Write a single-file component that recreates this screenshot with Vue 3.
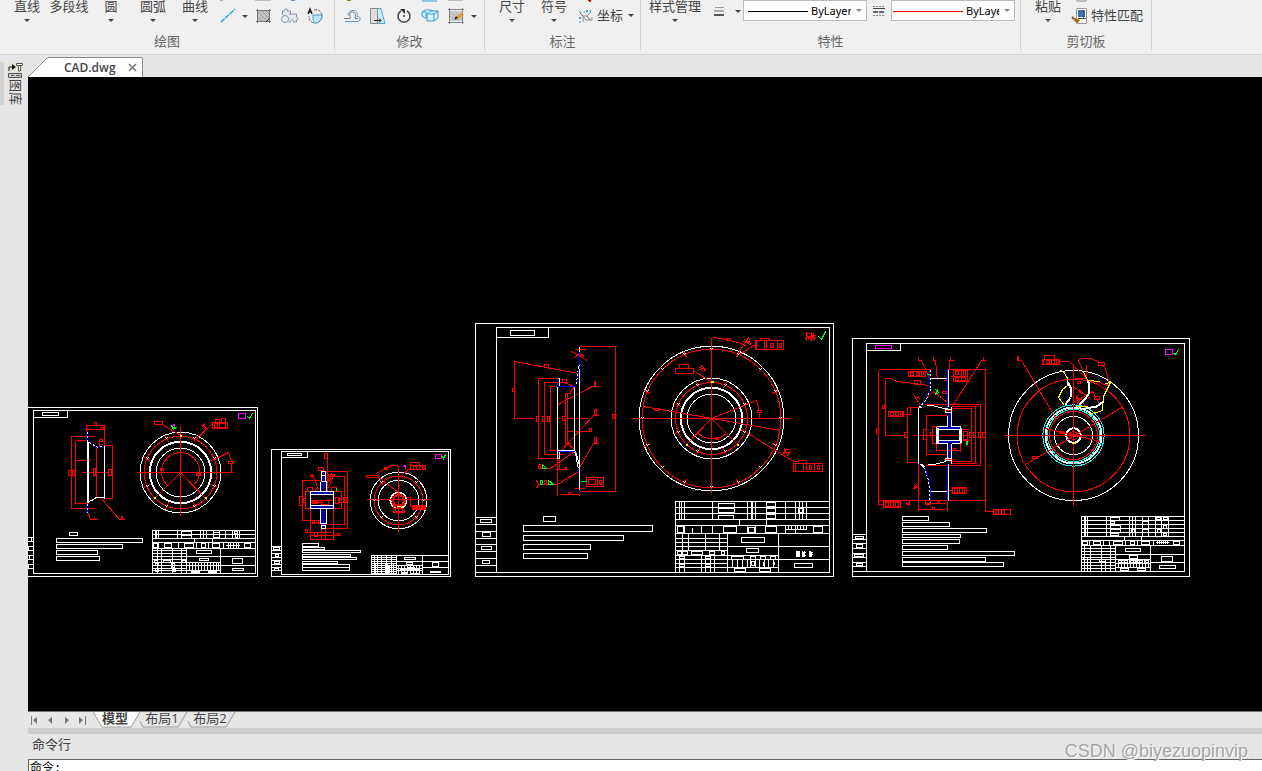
<script setup>
// Drawing data is written in thirds of a pixel, relative to each sheet's origin.
// h x1 x2 y…   horizontal lines      v y1 y2 x…   vertical lines
// r x1 y1 x2 y2 …   boxes            p x y x y …   polyline
const snap = (n) => Math.floor(n / 3) + 0.5

function toPath(source) {
  let d = ''
  for (const item of source.split(/[;\n]/)) {
    const [kind, ...rest] = item.trim().split(/\s+/)
    const n = rest.map((v) => snap(Number(v)))
    if (kind === 'h') for (const y of n.slice(2)) d += `M${n[0]} ${y}H${n[1]}`
    if (kind === 'v') for (const x of n.slice(2)) d += `M${x} ${n[0]}V${n[1]}`
    if (kind === 'r') {
      for (let i = 0; i + 3 < n.length; i += 4) {
        d += `M${n[i]} ${n[i + 1]}H${n[i + 2]}V${n[i + 3]}H${n[i]}Z`
      }
    }
    if (kind === 'p') {
      d += `M${n[0]} ${n[1]}`
      for (let i = 2; i < n.length; i += 2) d += `L${n[i]} ${n[i + 1]}`
    }
  }
  return d
}

function bolts(cx, cy, radius, angles, reach) {
  const ticks = []
  const marks = []
  for (const a of angles) {
    const c = Math.cos((a * Math.PI) / 180)
    const s = Math.sin((a * Math.PI) / 180)
    const at = (r) => `${Math.round(cx + r * c)} ${Math.round(cy + r * s)}`
    ticks.push(`p ${at(radius - reach)} ${at(radius + reach)}`)
    const x = Math.round(cx + radius * c)
    const y = Math.round(cy + radius * s)
    marks.push(`p ${x - 3} ${y - 3} ${x + 3} ${y + 3}`, `p ${x - 3} ${y + 3} ${x + 3} ${y - 3}`)
  }
  return { ticks: ticks.join(';'), marks: marks.join(';') }
}

const eight = [22.5, 67.5, 112.5, 157.5, 202.5, 247.5, 292.5, 337.5]
const sixteen = Array.from({ length: 16 }, (_, i) => i * 22.5)
const b1 = bolts(458, 217, 109, eight, 12)
const b2 = bolts(401, 180, 73, [0, 45, 135, 180, 225, 315], 9)
const b3 = bolts(244, 301, 208, sixteen, 10)
const b4 = bolts(244, 301, 108, eight, 12)

const sheets = [
  {
    x: 28, y: 400,
    circles: [
      [458, 217, 121, 'white'], [458, 217, 109, 'red'], [458, 217, 92, 'white thick'],
      [458, 217, 73, 'white'],
    ],
    arcs: [['M139 85 A19 19 0 1 1 166 85', 'red']],
    layers: [
      ['red', `v 73 95 175;v 73 136 230;h 175 230 76;r 199 67 206 76;h 168 229 88;r 217 82 227 88
        h 126 198 109 324;v 109 324 130;v 121 310 142;h 142 177 121 310;h 138 188 181;h 160 192 217
        r 121 211 129 226 133 211 139 226 196 205 203 226 241 208 251 226;v 142 290 205;h 205 238 217
        p 229 136 253 136 253 296 229 296;p 178 334 188 358 207 358;v 348 358 199;p 217 293 274 358 290 358
        r 280 348 284 358;v 115 136 214;r 215 118 222 124;p 205 142 224 130;h 325 614 217;v 76 347 458
        p 458 217 370 303;p 458 217 542 303;p 559 177 600 158 611 185;r 601 184 617 190;v 190 217 611
        r 378 64 404 74;p 404 73 456 107;r 553 67 599 85 562 58 575 67 580 55 592 67 559 70 568 82 575 70 592 82
        p 553 71 495 124;p 520 82 529 70 532 88 520 76;p 490 118 505 110;r 398 205 406 212 505 219 517 226
        ${b1.ticks}`],
      ['white', `r -10 22 689 529 16 31 683 520 16 31 119 52 43 37 92 47
        h -10 16 412 425 438 451 466 478 492 505;v 412 425 9;v 438 451 1;v 466 478 5;v 492 505 1
        v 120 308 178;v 136 296 229;p 178 308 205 292 229 292
        r 124 397 148 406 85 415 343 427 85 433 283 445 85 451 208 463 85 469 214 481
        r 373 391 683 520;h 373 683 403 415 427 445;v 391 415 383 386 391 448 460 490 517 526 535 557 575 592 613 634
        r 460 394 490 406 557 397 575 412 619 394 628 400 622 403 628 412;v 415 427 499 553
        r 376 430 388 442 409 430 430 442 470 430 496 442 520 430 532 442 553 430 574 442 649 430 667 442
        v 427 445 391 451 505 541 586;h 592 634 436;v 427 445 600 608 616 624 632
        v 445 520 475 577;h 373 475 451 460 469 478 487 496 505 511;v 445 520 387 400 433 459
        r 379 480 388 486 406 480 427 486 463 480 472 486 382 490 391 495 430 490 439 502 382 505 391 514 433 508 442 514
        h 475 577 469 487 496 511;r 505 451 550 460 514 475 541 481;v 487 511 484 493 502 511 520 529 538 547 556 565 571
        r 490 514 514 517 541 514 565 517;h 577 683 469 496;r 613 475 643 490 613 505 646 511;${b1.marks}`],
      ['white thick', 'v 121 308 177'],
      ['blue', 'v 95 120 175;v 310 338 175;p 181 124 205 142 229 137'],
      ['white dash', 'v 95 120 178;v 310 338 178;p 184 127 208 142 229 136;p 181 306 205 292'],
      ['yellow thick', 'h 376 382 292;h 529 535 292;h 454 460 107'],
      ['green', 'p 430 82 445 82 436 88 430 76;p 658 49 664 55 674 40'],
      ['magenta', 'p 433 76 439 73 439 80;r 631 40 652 55'],
    ],
  },
  {
    x: 265, y: 440,
    circles: [
      [401, 180, 85, 'white'], [401, 180, 73, 'red'], [401, 180, 61, 'white'],
      [401, 180, 24, 'white thick'], [401, 180, 16, 'red thick'], [401, 180, 21, 'red dash'],
    ],
    hatches: [[137, 154, 205, 163], [137, 196, 205, 206], [169, 112, 181, 154], [169, 206, 181, 249]],
    layers: [
      ['red', `v 37 154 187;r 178 40 186 55 160 82 176 91 136 103 143 110 202 103 209 110
        p 170 94 248 94 248 265 181 265;p 185 109 239 109 239 253 181 253;p 166 121 112 121 112 241 166 241
        p 136 154 121 154 121 206 136 206;p 206 154 229 154 229 206 206 206;r 103 169 112 196 115 175 121 187 211 172 220 190 223 175 229 187 235 172 244 187
        h 136 206 181;h 133 176 187;r 142 184 157 190 169 181 190 192;v 206 298 136 206;h 136 206 298;h 136 226 286;h 118 196 277;r 121 268 128 276
        v 250 298 169 181;r 199 142 214 154 127 142 142 154;p 145 110 160 148;p 205 106 187 148;p 184 94 196 118 184 130 199 100
        p 148 154 154 145 163 151;h 139 166 247;r 142 241 148 250 160 241 166 250 148 277 157 289 217 280 222 286
        h 304 491 179;v 76 274 401;r 304 106 341 112;p 341 112 401 158;p 334 100 360 86 380 76 398 76 401 82;r 358 82 368 88
        p 408 106 436 82;r 436 76 482 88 436 67 463 76 445 79 454 88 463 79 472 88 442 196 482 208
        h 442 482 199 202 205;p 386 180 386 217 418 217 418 205;r 391 206 412 215;v 168 200 436;p 424 172 436 172
        ${b2.ticks}`],
      ['white', `r 19 28 557 409 49 34 551 403 49 34 128 52 67 40 110 47;h 19 49 319 331 340 352 361 373 382 391
        r 25 322 43 328 31 343 40 349 28 364 43 370 28 385 40 390
        r 112 310 160 319 112 322 179 329 112 331 287 337 112 343 257 349 112 352 275 358 112 364 218 370 112 373 254 391;h 112 254 382
        r 136 154 206 206;h 136 206 163 196;v 124 154 166 183;v 206 250 166 183;r 170 94 181 106 170 256 181 264;h 166 183 250 124;v 106 124 170 181
        r 319 346 551 403;h 319 395 352 358 364 370 376 382 388 394 400;v 346 403 328 338 364 380 395 472 349
        h 395 551 364;h 472 551 382;h 395 472 375 385 392;v 375 403 400 409 418 427 436 445 454 463
        r 418 352 452 358 424 367 443 374 502 367 520 379;v 370 403 361 367 385 331;${b2.marks}`],
      ['white thick', 'h 493 527 393;h 427 448 382;h 403 424 387;h 428 460 388;h 410 425 398;h 436 462 399;v 376 400 362;v 376 400 370'],
      ['blue', 'p 172 97 180 103;h 169 181 252'],
      ['green', 'v 142 151 214;p 533 49 536 54 542 43'],
      ['yellow', 'h 394 406 199'],
      ['magenta', 'p 415 79 421 76 421 85;r 511 43 530 55'],
    ],
  },
  {
    x: 470, y: 318,
    layers: [
      ['red', `p 328 85 436 85 436 520 328 520;r 427 289 433 301;h 313 345 94;p 304 100 353 127;p 314 118 330 106 342 118;h 317 341 112
        p 133 130 325 166;v 130 301 133;h 133 191 301;r 127 211 132 220 223 139 236 148;p 263 181 205 181 205 421 263 421
        p 289 193 223 193 223 409 281 409;p 263 205 241 205 241 397 263 397;r 199 295 205 310 217 295 223 310 232 295 239 310
        h 255 270 301;r 277 295 285 307;h 285 351 301;v 226 376 287 292;h 283 300 226 376;h 292 360 340;r 358 331 365 340
        p 263 258 368 205 386 205;r 373 190 377 205;p 275 397 370 292 386 292;r 373 274 380 289;p 325 455 370 376 386 376;r 373 358 380 373
        p 313 400 240 452 202 452;r 205 439 212 451;p 325 460 262 499 202 499;v 421 532 262;r 223 487 230 499;p 199 487 205 499 199 511
        h 255 292 454;v 400 454 268;r 286 448 290 454;h 268 328 529;v 520 532 328;r 295 523 302 529;h 313 342 511
        r 349 478 400 505 355 484 377 499 388 487 395 499;v 478 505 382;p 281 193 313 205 297 226;r 278 184 288 193;p 292 376 313 394`],
      ['white', `r 16 16 1091 775 79 28 1079 763 79 28 236 58 121 37 194 52;h 16 79 763;h 16 79 598 619 640 661 679 700 721 742
        r 31 604 65 613 37 643 62 655 34 685 65 694 37 727 59 736
        r 220 595 257 610 160 622 548 640 160 652 461 667 160 679 362 694 160 706 353 721
        v 85 515 328;v 181 421 263;v 205 400 313;p 263 181 269 181 269 205;p 263 421 269 421 269 400;h 263 313 397
        p 313 400 319 418 322 442 328 457;p 316 400 325 430 328 445;p 316 400 322 421`],
      ['blue', 'v 100 140 328;p 328 145 316 205;h 263 313 205;h 263 313 400;v 181 205 263;v 448 466 325;v 514 523 328'],
      ['white dash', 'p 325 145 322 175 316 205'],
      ['green', 'p 217 440 217 450 230 450 217 440;r 211 487 217 499;p 236 487 236 499 250 499 236 487;h 330 348 490'],
    ],
  },
  {
    x: 630, y: 318,
    circles: [
      [244, 301, 217, 'white'], [244, 301, 208, 'red'], [244, 301, 121, 'white'], [244, 301, 108, 'red'],
      [244, 301, 92, 'white thick'], [244, 301, 73, 'white'],
    ],
    arcs: [['M68 115 A21 21 0 0 0 97 115', 'red']],
    layers: [
      ['red', `h 7 477 301;v 58 524 244;p 244 301 169 378;p 244 301 322 378;p 40 265 450 336;r 73 271 89 278
        p 244 301 379 248 388 280;r 382 277 395 284;v 284 301 388;p 335 335 490 430 503 430;r 490 436 578 460 505 427 530 435 538 442 545 454 562 442 569 454
        v 436 460 496 520 529 553;p 463 392 472 412 481 400 460 406 466 394 478 394;p 250 58 290 64 335 76 350 85;r 289 61 302 67
        r 376 67 461 94 391 61 418 67 447 76 455 88 421 76 431 88;v 67 94 379 403 409 443;p 328 109 376 79;p 322 109 355 58 361 79 340 70 358 73 343 64
        r 136 151 190 166 148 139 176 151;p 190 156 250 195;p 207 157 214 142 226 154 208 148 220 160 230 154;r 256 357 266 363
        v 40 67 530 545;h 525 537 46 55;p 525 64 530 49 537 64;h 538 557 52 58;v 43 64 551;p 538 67 545 49 557 67
        ${b3.ticks};${b4.ticks}`],
      ['white', `r 136 550 599 763;h 136 599 568 586 604 622 646;v 550 604 148 155 163 247 352 364 367 376 409 437 466 496 508 518 529
        r 265 556 313 570 265 572 313 584 265 592 311 604 409 553 437 565 409 571 437 583 409 589 437 601 505 571 520 583
        v 604 622 328 409;r 142 625 161 643 280 625 320 643 355 628 374 643 406 625 440 643 550 625 578 643
        v 622 646 214 247 352 376 466 496 163;v 628 646 187;h 466 530 634;v 622 634 475 484 502 511 520 529
        v 646 763 292 445;h 136 292 661 673 685 697 712 724 736 748;v 646 697 157 175 226 268;v 712 763 148 163 214 226 241 253
        r 142 700 155 709 157 700 172 709 184 700 218 709 238 700 254 709 274 700 284 709
        r 148 715 163 721 148 739 163 745 226 715 241 721 226 739 241 745
        h 292 599 685;h 292 445 712 724 748;h 445 599 724;r 334 658 404 673 349 691 386 703 493 736 548 748
        r 304 715 340 724 361 715 376 724 391 715 406 724 421 715 436 724 364 730 374 742
        v 724 748 307 322 337 352 361 376 388 403 415 430;r 313 751 346 760 388 751 421 760
        h 497 509 700 706;v 697 715 499 502 505;h 514 527 703 712;v 697 715 517 523;h 535 547 703 709;v 697 715 541 538
        ${b3.marks};${b4.marks}`],
      ['white thick', 'v 730 743 399;v 730 740 429;v 700 715 504;v 700 714 520;v 700 714 541'],
      ['yellow thick', 'h 241 249 190;h 166 173 378;h 319 326 378'],
      ['green', 'p 565 55 573 64 587 40'],
    ],
  },
  {
    x: 848, y: 330,
    hatches: [[301, 250, 310, 290], [268, 290, 337, 298], [268, 331, 337, 340], [301, 340, 310, 385]],
    layers: [
      ['red', `h 91 247 118 511;v 118 523 91;h 91 106 523;r 106 514 158 532 112 517 121 529 127 517 136 529 142 517 151 529
        p 298 118 412 118 412 544 436 544;r 436 538 486 553 442 541 451 550 460 541 469 550;h 247 412 511;r 85 295 91 310 403 307 411 322
        p 109 145 130 145 145 154 200 160 240 167;v 145 315 112;h 109 165 316;r 103 226 109 235 199 151 217 162
        h 178 211 232 397;v 232 397 178;r 169 307 178 322;h 192 240 316;v 256 373 235;h 232 298 256 373;r 226 298 235 328 247 307 254 319
        p 265 290 253 290 253 340 265 340;p 228 223 397 223 397 406 228 406;p 310 230 385 230;v 230 400 382;h 310 385 400
        p 310 236 371 236 371 394 310 394;r 363 307 371 322 376 307 382 322 390 307 397 322;h 337 361 298 331;r 346 304 358 328
        h 247 361 316;v 340 364 265 337;h 268 337 361;r 316 355 323 361;v 400 541 211;v 511 541 298;h 211 293 538;r 253 532 260 538
        h 229 293 520;r 268 514 274 520 232 511 247 523;r 313 472 355 490 319 475 328 487 334 475 343 487;v 472 490 350;h 298 313 481
        r 121 244 167 260 127 247 136 257 142 247 151 257;v 244 260 157 162;p 167 253 187 253 187 232
        v 79 91 211 256 308 405;p 208 91 220 91 244 145;p 250 91 262 91 268 151;p 320 91 304 91 304 118;p 412 91 400 91 310 232
        r 181 124 232 139 187 127 196 136 205 127 214 136;v 124 139 220 226;r 316 121 358 154 322 124 331 134 322 142 331 151 340 142 352 151
        h 307 358 138;v 121 138 340 346 352;p 232 208 256 184 298 217;r 283 184 296 190;p 197 193 218 226;p 202 205 211 199 214 208
        h 286 316 241 388;p 196 460 208 472 196 475 205 463;p 172 526 184 514 184 526 175 520;h 285 298 151`],
      ['white', `r 13 25 1025 739 55 40 1009 724 55 40 158 61;h 13 55 724;h 13 55 613 628 640 655 670 682 697 709
        r 22 619 47 626 25 643 44 653 19 673 47 680 25 700 44 707
        r 163 559 242 571 163 577 305 589 163 595 416 607 163 613 338 622 163 628 335 640 163 646 299 658 163 664 500 676 163 682 413 694 163 697 467 709
        v 232 400 211;h 247 298 145 484;v 118 230 301;v 400 511 301;p 234 226 250 226 290 235 310 238;p 237 403 255 402 295 395
        v 290 340 266 337;h 266 298 290 340;h 310 337 290 340;r 268 298 335 331;v 256 290 298;v 230 290 310;v 340 400 310;v 340 385 298
        r 292 238 310 247 292 385 310 391`],
      ['blue', 'v 118 230 298;v 400 511 298;v 118 178 244;p 244 178 232 214 213 233;p 218 400 232 415 241 445 247 484 247 511'],
      ['white dash', 'v 118 178 247;p 247 178 235 208 213 233;p 216 402 229 415 241 451 244 484 244 511'],
      ['white thick', 'v 292 338 267;v 292 338 336;p 220 404 229 412;p 213 233 220 228'],
      ['green', 'h 235 243 133;p 262 178 272 187 262 194 268 178;v 331 343 355 358;h 352 358 343'],
      ['magenta', 'r 82 46 131 55'],
    ],
  },
  {
    x: 1000, y: 330,
    circles: [
      [220, 316, 195, 'white'], [220, 316, 169, 'red'], [220, 316, 92, 'cyan'], [220, 316, 78, 'cyan'],
      [220, 316, 84, 'white thick'], [220, 316, 84, 'cyan dash'], [220, 316, 72, 'red'], [220, 316, 57, 'white'],
      [220, 316, 22, 'white thick'], [220, 316, 12, 'red'],
    ],
    layers: [
      ['red', `h 10 435 316;v 100 527 220;p 75 403 370 230;r 97 379 112 386;p 136 294 300 334;r 178 304 190 310
        p 50 91 63 91 170 268;r 52 80 56 91;r 127 88 179 103 133 76 163 88 139 91 148 100 154 91 163 100;v 88 103 130 170 175
        p 179 94 208 94 262 148;p 262 154 235 91 245 85 270 85 300 97 315 115 325 155 322 166 290 155 262 151;r 295 97 313 106
        v 103 148 259;r 232 154 242 160;p 193 148 258 145;p 226 196 238 208 226 205 235 193;p 238 178 250 190 238 187 247 181
        r 283 199 298 208;p 220 218 278 184 290 205 300 226;p 222 172 270 205;p 226 226 244 205 256 232;p 160 265 172 265;p 210 310 230 322;p 210 322 230 310`],
      ['yellow', `p 182 121 190 124 203 145 202 166 188 178 175 202 193 226;p 250 124 262 152 300 154
        p 316 160 331 157 310 200 308 240 290 247 270 250;h 217 226 336;h 226 262 230`],
      ['white', 'p 203 155 213 175 211 200 195 226;p 262 151 267 185 255 205 235 225'],
      ['white thick', 'p 205 160 213 178 210 202 195 224;p 264 154 267 187 255 205 238 222;p 310 213 290 230 240 238'],
      ['yellow thick', 'h 216 225 336'],
      ['magenta', 'r 496 58 518 73'],
      ['green', 'p 520 70 525 72 536 58'],
      ['white', `r 244 559 553 724;h 244 553 571 583 595 607 619 631 646;v 559 619 253 256 262 319 331 388 397 406 427 445 466 484 505
        r 331 562 358 570 331 574 343 580 331 586 361 594 331 598 361 606 331 610 355 616 427 574 445 582 427 598 445 606 469 562 480 568 490 562 502 568 472 598 480 606 490 586 499 594 490 610 499 616 394 598 403 606
        v 619 631 373 424;r 247 634 262 643 280 634 302 643 340 634 367 643 391 634 404 643 424 634 448 643 520 634 538 643
        v 631 646 268 310 328 376 412 460;h 466 505 637;v 631 640 472 478 484 490 496 502
        v 646 724 346 451;h 244 346 655 664 673 682 688 697 706 715;v 646 724 253 271 304 331;v 688 724 262 316
        h 346 553 673;h 451 553 697;h 346 451 688 700 712;r 376 655 422 664 388 676 412 685 484 679 517 694 478 706 526 715
        r 355 691 382 698 388 691 406 698 412 691 427 698 433 691 445 698 361 715 385 721 412 715 436 721;v 688 712 355 364 373 382 391 400 409 418 427 436 445
        r 250 682 262 688 298 688 316 694`],
    ],
  },
]

const drawings = sheets.map((s) => ({
  ...s,
  layers: s.layers.map(([cls, source]) => ({ cls, d: toPath(source) })),
}))
</script>

<template>
  <div class="app">
    <header class="ribbon">
      <section class="group draw">
        <div class="tools">
          <button class="big">直线<i class="caret"></i></button>
          <button class="big">多段线</button>
          <button class="big">圆<i class="caret"></i></button>
          <button class="big">圆弧<i class="caret"></i></button>
          <button class="big">曲线<i class="caret"></i></button>
          <button class="tool narrow" aria-label="构造线">
            <svg width="20" height="26"><path d="M2 0h3" stroke="#666" /><path d="M3 22l14-13" stroke="#2fa7e0" stroke-width="1.5" stroke-dasharray="5 1" fill="none" /></svg>
          </button>
          <button class="drop" aria-label="更多构造线"><i class="caret"></i></button>
          <button class="tool" aria-label="图案填充">
            <svg width="20" height="26"><path d="M2 0h16" stroke="#8a8f99" /><path d="M4 11h12v10H4z" fill="#c4c4c4" /><path d="M5 12l9 9M9 11l7 8M4 16l5 5M13 11l3 3" stroke="#999" /><path d="M3 10.500h15M3 21.500h15M4.500 9v14M16.500 9v14" stroke="#777" fill="none" /><path d="M16 19l-3 3" stroke="#333" /></svg>
          </button>
          <button class="tool" aria-label="块">
            <svg width="20" height="26"><path d="M12 0h4" stroke="#5c9bd0" stroke-width="2" /><path d="M3.500 15v-4h2c-1-3 4-3 3 0h3v3h-1c3 1 3-1 4 0h3v3c2 0 2 3 0 3v2h-3c0-3-3-3-3 0h-2" fill="#e3e8f0" stroke="#8a93a0" /><circle cx="6" cy="19" r="3.500" fill="#f2f5f8" stroke="#7b93ad" /></svg>
          </button>
          <button class="tool" aria-label="面域">
            <svg width="20" height="26"><path d="M3 14l2-5 2 5M4 12h3" stroke="#222" stroke-width="1.500" fill="none" /><path d="M9 10c5-1 8 2 8 6s-3 7-7 7-6-3-6-7" fill="none" stroke="#666" stroke-dasharray="3 1" /><path d="M8 15h9c0 5-3 8-7 8-2-1-2-3-2-8z" fill="#bde5fb" stroke="#4b91bd" /></svg>
          </button>
        </div>
        <h2>绘图</h2>
      </section>

      <section class="group modify">
        <div class="tools">
          <button class="tool" aria-label="偏移">
            <svg width="20" height="26"><path d="M5 0h4" stroke="#8d8733" stroke-width="2" /><path d="M2 18.500h6c1-1-1-3 0-5s4-2 5 0 0 3 0 5h3" fill="none" stroke="#777" /><path d="M3 21.500h13c3-1 3-5-1-5 1-3 0-6-4-6-3 0-5 2-5 5" fill="none" stroke="#5b99c8" /></svg>
          </button>
          <button class="tool" aria-label="拉伸">
            <svg width="20" height="26"><path d="M9 8.500h4l4 15H9z" fill="#c9ecfc" stroke="#48a8d8" /><path d="M2.500 8.500h7v15h-7z" fill="#ddd" stroke="#888" /><path d="M6 20.500h7m-2-2l2 2-2 2" stroke="#222" fill="none" /></svg>
          </button>
          <button class="tool" aria-label="旋转">
            <svg width="20" height="26"><path d="M13 11a6 6 0 1 1-6 0" fill="none" stroke="#444" stroke-width="1.500" /><path d="M6 9h5v5z" fill="#333" /><circle cx="10" cy="16" r="1" fill="#333" /></svg>
          </button>
          <button class="tool" aria-label="阵列">
            <svg width="20" height="26"><path d="M2 1h15" stroke="#2f9ccf" /><path d="M2 12l3-2h6l3 2-2 6H5l-3-2z" fill="#d8f0fb" stroke="#3a9ccc" /><path d="M7 14h7v7H7zM7 14l4-3h7l-4 3M18 11v7l-4 3M2 12h4v5" fill="#d8f0fb" stroke="#3a9ccc" /></svg>
          </button>
          <button class="tool" aria-label="编辑图案填充">
            <svg width="20" height="26"><path d="M2 0h15" stroke="#8a8f99" /><path d="M4 11h12v10H4z" fill="#ccc" /><path d="M5 12l8 8M9 11l7 8M4 16l5 5" stroke="#aaa" /><path d="M2 9.500h16M2 22.500h16M3.500 8v16M16.500 8v16" stroke="#808088" fill="none" /><path d="M11 18l6-5" stroke="#e59b2e" stroke-width="3" /><path d="M9 19l2-2" stroke="#222" stroke-width="2" /></svg>
          </button>
          <button class="drop" aria-label="更多修改"><i class="caret"></i></button>
        </div>
        <h2>修改</h2>
      </section>

      <section class="group note">
        <div class="tools">
          <button class="big">尺寸<i class="caret"></i></button>
          <button class="big">符号<i class="caret"></i></button>
          <button class="labelled">
            <svg width="22" height="26"><path d="M13 0h3l-1 2z" fill="#c00" stroke="#c00" /><path d="M8 22v-6h4l4-4M8 16l3 4h6v-3" fill="none" stroke="#888" /><path d="M5 13l3 3M12 16l3 4" stroke="#666" /><path d="M11 10l2 2m0-2l-2 2M16 10l-1 3M5 11v2M4 17l2 2m0-2l-2 2M5 21v2M9 12h1" stroke="#3d9fd5" fill="none" /></svg>
            坐标<i class="caret"></i>
          </button>
        </div>
        <h2>标注</h2>
      </section>

      <section class="group props">
        <div class="tools">
          <button class="big wide">样式管理<i class="caret"></i></button>
          <button class="tool weight" aria-label="线宽">
            <svg width="20" height="26"><path d="M6 7.500h9" stroke="#999" /><path d="M5 11h10" stroke="#666" /><path d="M5 15h10" stroke="#555" stroke-width="2" /></svg>
          </button>
          <button class="drop high" aria-label="更多线宽"><i class="caret"></i></button>
          <div class="field">
            <svg class="sample" viewBox="0 0 60 2" preserveAspectRatio="none"><path d="M0 1h60" stroke="#000" stroke-width="1" shape-rendering="crispEdges" /></svg>
            <select aria-label="线宽样式"><option>ByLayer</option></select>
            <i class="caret light"></i>
          </div>
          <button class="tool style" aria-label="线型">
            <svg width="14" height="26"><path d="M1 6.500h12M1 15.500h12" stroke="#888" stroke-dasharray="2 1" /><path d="M1 8.500h12" stroke="#444" /><path d="M1 12h12" stroke="#666" stroke-width="2" stroke-dasharray="5 1" /></svg>
          </button>
          <div class="field">
            <svg class="sample long" viewBox="0 0 70 2" preserveAspectRatio="none"><path d="M0 1h70" stroke="#f00" stroke-width="1" shape-rendering="crispEdges" /></svg>
            <select aria-label="线型样式"><option>ByLayer</option></select>
            <i class="caret light"></i>
          </div>
        </div>
        <h2>特性</h2>
      </section>

      <section class="group clip">
        <div class="tools">
          <button class="big">粘贴<i class="caret"></i></button>
          <button class="labelled match">
            <svg width="18" height="26"><path d="M6 0v1h9V0" fill="#fff" stroke="#888" /><path d="M5.500 8.500h10v15h-10z" fill="#fff" stroke="#999" /><path d="M7 10h7v7H7z" fill="#3976b8" /><path d="M12.500 10v9M7 18.500h8" stroke="#555" /><path d="M2 18c4 0 5 1 7 2l-2 3-3-1z" fill="#b86b22" /><path d="M1 17l2 2" stroke="#8a5320" stroke-width="2" /></svg>
            特性匹配
          </button>
        </div>
        <h2>剪切板</h2>
      </section>
    </header>

    <div class="workspace">
      <aside class="side">
        <button class="library">
          <svg width="15" height="17"><path d="M0 0h15v17H0z" fill="#e5e5d5" /><path d="M1 9V5h4" stroke="#111" fill="none" /><path d="M4 2l4 3-4 3z" fill="#111" /><path d="M8.500 1.500h6v2h-6zM10.500 4v5h2V4" fill="#fff" stroke="#555" /><path d="M.5 11.500h13v4H.5z" fill="#ccc" stroke="#555" /><path d="M3 13.500h3M8 13.500h4" stroke="#555" /></svg>
          <span>图库</span>
        </button>
      </aside>

      <main class="main">
        <nav class="files">
          <svg class="slope" width="20" height="20"><path d="M0 20L19 0h1v20z" fill="#fff" /><path d="M0 20L19 1h1" fill="none" stroke="#8c8c8c" /></svg>
          <div class="file">
            <a href="#">CAD.dwg</a>
            <button class="close" aria-label="关闭"><svg width="9" height="9"><path d="M1 1l7 7M8 1l-7 7" stroke="#777" stroke-width="1.500" /></svg></button>
          </div>
        </nav>

        <div class="canvas">
          <svg width="100%" height="100%">
            <defs>
              <pattern id="hatch" width="3" height="3" patternUnits="userSpaceOnUse">
                <path d="M0 0h2v1H0zM1 1h2v1H1zM0 2h1v1H0zM2 2h1v1H2z" fill="#00f" />
              </pattern>
            </defs>
            <g v-for="(s, i) in drawings" :key="i" :transform="`translate(${s.x - 28} ${s.y - 77})`">
              <rect v-for="(t, k) in s.hatches" :key="'t' + k" :x="t[0] / 3" :y="t[1] / 3" :width="(t[2] - t[0]) / 3" :height="(t[3] - t[1]) / 3" class="hatch" />
              <circle v-for="(c, k) in s.circles" :key="'c' + k" :cx="snap(c[0])" :cy="snap(c[1])" :r="c[2] / 3" :class="c[3]" />
              <path v-for="(a, k) in s.arcs" :key="'a' + k" :d="a[0]" :class="a[1]" />
              <path v-for="(l, k) in s.layers" :key="'l' + k" :d="l.d" :class="l.cls" />
            </g>
          </svg>
        </div>

        <nav class="layouts">
          <button aria-label="第一个"><svg width="8" height="9"><path d="M1.500 0v9" stroke="#777" /><path d="M7 1v7L3 4z" fill="#777" /></svg></button>
          <button aria-label="上一个"><svg width="8" height="9"><path d="M6 1v7L2 4z" fill="#777" /></svg></button>
          <button aria-label="下一个"><svg width="8" height="9"><path d="M3 1v7l4-4z" fill="#777" /></svg></button>
          <button aria-label="最后一个"><svg width="8" height="9"><path d="M1 1v7l4-4z" fill="#777" /><path d="M7.500 0v9" stroke="#777" /></svg></button>
          <a href="#" class="sheet active"><svg viewBox="0 0 48 16"><path d="M0 0l9 15h29l9-15" fill="#fff" stroke="#999" /></svg><span>模型</span></a>
          <a href="#" class="sheet"><svg viewBox="0 0 48 16"><path d="M0 9l3 6h35l9-15" fill="none" stroke="#999" /></svg><span>布局1</span></a>
          <a href="#" class="sheet"><svg viewBox="0 0 48 16"><path d="M0 9l3 6h35l9-15" fill="none" stroke="#999" /></svg><span>布局2</span></a>
        </nav>
        <div class="splitter"></div>
        <label class="caption" for="command">命令行</label>
        <div class="command"><input id="command" type="text" value="命令:" /></div>
      </main>
    </div>
    <div class="watermark">CSDN @biyezuopinvip</div>
  </div>
</template>

<style>
body { margin: 0; overflow: hidden; }
</style>

<style scoped>
.app {
  position: relative;
  display: flex;
  flex-direction: column;
  height: 100vh;
  overflow: hidden;
  background: #e6e6e6;
  color: #444;
  font: 13px/16px "Open Sans", "Noto Sans CJK SC", sans-serif;
}
button {
  margin: 0;
  padding: 0;
  border: 0;
  background: none;
  color: inherit;
  font: inherit;
  white-space: nowrap;
}
a { color: inherit; text-decoration: none; }
svg { display: block; flex: none; }

.ribbon { display: flex; background: #f0f0f0; border-bottom: 1px solid #d2d2d2; }
.group {
  display: flex;
  flex-direction: column;
  height: 51px;
  margin-bottom: 3px;
  border-right: 1px solid #d2d2d2;
}
.tools { display: flex; height: 33px; padding: 0 6px; }
.modify .tools { padding: 0 5px 0 4px; }
.props .tools { padding: 0 5px 0 4px; }
.clip .tools { padding-right: 8px; }
h2 { margin: 0; font-size: 13px; line-height: 16px; font-weight: 400; color: #666; text-align: center; }
.big {
  display: flex;
  flex-direction: column;
  align-items: center;
  gap: 7px;
  width: 42px;
  height: 24px;
  line-height: 12px;
}
.wide { width: 60px; }
.caret { flex: none; width: 0; height: 0; border: 3px solid transparent; border-top-color: #444; border-bottom: 0; }
.caret.light { border-top-color: #888; }
.tool { display: flex; justify-content: center; width: 26px; height: 26px; }
.narrow { width: 24px; }
.weight { width: 28px; }
.style { width: 24px; }
.drop { display: flex; align-items: center; justify-content: center; width: 10px; height: 32px; }
.high { height: 22px; }
.labelled { display: flex; align-items: center; height: 30px; }
.labelled .caret { margin-left: 5px; }
.labelled svg { align-self: flex-start; }
.match svg { margin: 0 2px; }
.field {
  box-sizing: border-box;
  display: flex;
  align-items: center;
  width: 124px;
  height: 21px;
  padding-right: 4px;
  border: 1px solid #bbb;
  background: #fff;
}
.sample { width: 60px; height: 2px; margin-left: 4px; }
.long { width: 70px; margin-left: 1px; }
select {
  flex: 1;
  min-width: 0;
  height: 19px;
  margin: 0 5px 0 3px;
  padding: 0;
  border: 0;
  appearance: none;
  background: none;
  color: #000;
  font: 11px/18px "Noto Sans", sans-serif;
  text-overflow: clip;
}

.workspace { display: flex; flex: 1; min-height: 0; }
.side { width: 28px; padding-top: 7px; box-sizing: border-box; }
.library { display: flex; flex-direction: column; align-items: flex-start; padding-left: 4px; border-left: 4px solid #d2d2d2; }
.library span { writing-mode: vertical-rl; text-orientation: sideways; font-size: 13px; line-height: 15px; }
.main { display: flex; flex: 1; flex-direction: column; min-width: 0; }
.files { display: flex; align-items: flex-end; height: 22px; }
.file {
  box-sizing: border-box;
  display: flex;
  align-items: center;
  gap: 12px;
  height: 20px;
  padding: 0 5px 0 16px;
  border: 1px solid #8c8c8c;
  border-width: 1px 1px 0 0;
  border-radius: 0 2px 0 0;
  background: #fff;
  font-size: 12px;
  font-weight: 600;
}
.canvas { flex: 1; min-height: 0; background: #000; overflow: hidden; }
.canvas path, .canvas circle { fill: none; stroke-width: 1; shape-rendering: crispEdges; }
.canvas pattern path { fill: #00f; }
.hatch { fill: url(#hatch); shape-rendering: crispEdges; }
.canvas .white { stroke: #fff; }
.canvas .red { stroke: #f00; }
.canvas .blue { stroke: #00f; }
.canvas .green { stroke: #0f0; }
.canvas .yellow { stroke: #ff0; }
.canvas .magenta { stroke: #f0f; }
.canvas .cyan { stroke: #0ff; }
.canvas .thick { stroke-width: 2; }
.canvas .dash { stroke-dasharray: 6 1; }
.canvas .white.dash { stroke-dasharray: 2 2; }
.canvas .cyan.dash { stroke-dasharray: 2 6; }

.layouts { display: flex; height: 16px; border-top: 1px solid #777; }
.layouts button { display: flex; align-items: center; width: 16px; padding-left: 2px; }
.sheet {
  position: relative;
  box-sizing: border-box;
  width: 48px;
  height: 16px;
  padding-right: 4px;
  line-height: 13px;
  text-align: center;
  white-space: nowrap;
}
.sheet svg { position: absolute; inset: 0; width: 48px; height: 16px; }
.sheet span { position: relative; }
.active { margin-left: 1px; font-weight: 700; }
.active + .sheet { margin-left: -1px; }
.splitter { height: 6px; background: #cdcdcd; }
.caption { padding: 2px 4px 7px; }
.command { height: 11px; overflow: hidden; border-top: 1px solid #666; border-left: 1px solid #666; background: #fff; }
input {
  display: block;
  width: 100%;
  height: 18px;
  padding: 0 1px;
  border: 0;
  outline: 0;
  box-sizing: border-box;
  background: none;
  color: #000;
  font: 12px/18px "Liberation Mono", "Noto Sans CJK SC", monospace;
}
.watermark {
  position: absolute;
  right: 14px;
  bottom: 9px;
  color: #a4a4a4;
  font: 18px/22px "Liberation Sans", sans-serif;
  text-shadow: 1px 1px 0 #fff;
}
</style>
